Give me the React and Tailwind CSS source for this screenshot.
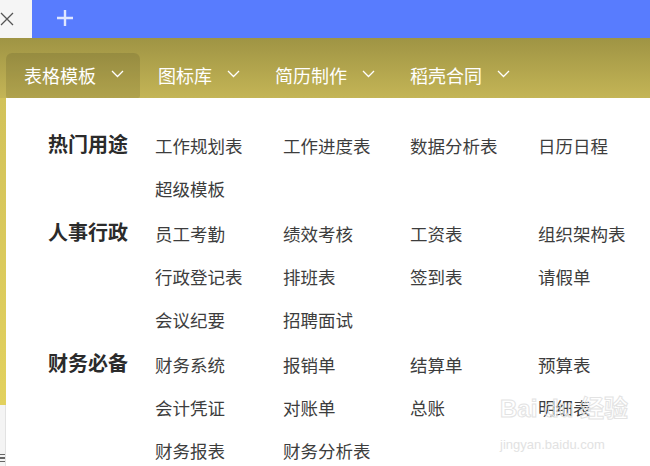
import React from "react";

const FONT = { fontFamily: '"Microsoft YaHei", "Noto Sans CJK SC", "Noto Sans", sans-serif' };

const NAV = ["表格模板", "图标库", "简历制作", "稻壳合同"];

const GROUPS = [
  { title: "热门用途", items: ["工作规划表", "工作进度表", "数据分析表", "日历日程", "超级模板"] },
  {
    title: "人事行政",
    items: ["员工考勤", "绩效考核", "工资表", "组织架构表", "行政登记表", "排班表", "签到表", "请假单", "会议纪要", "招聘面试"],
  },
  {
    title: "财务必备",
    items: ["财务系统", "报销单", "结算单", "预算表", "会计凭证", "对账单", "总账", "明细表", "财务报表", "财务分析表"],
  },
];

const Chevron = () => (
  <svg width="13" height="8" viewBox="0 0 13 8" fill="none" className="ml-[15px] mt-[-4px] shrink-0">
    <path d="M1 1l5.5 5.5L12 1" stroke="white" strokeWidth="1.3" />
  </svg>
);

export default function App() {
  return (
    <div className="w-[650px] h-[466px] overflow-hidden bg-white relative" style={FONT}>
      {/* top tab strip */}
      <div className="flex h-[38px]">
        <div className="w-[32px] shrink-0 bg-[#f5f5f5] flex items-center">
          <svg width="14" height="14" viewBox="0 0 14 14">
            <path d="M1 1l12 12M13 1L1 13" stroke="#555" strokeWidth="1.3" />
          </svg>
        </div>
        <div className="flex-1 bg-[#587cfe] flex items-center">
          <svg width="18" height="18" viewBox="0 0 18 18" className="ml-[24px] mt-[-2px]">
            <path d="M9 1v16M1 9h16" stroke="#dfe6ff" strokeWidth="2.4" />
          </svg>
        </div>
      </div>

      {/* gold nav */}
      <div className="h-[60px] bg-gradient-to-b from-[#9f9444] to-[#c4b556] flex items-end pl-[6px]">
        <div className="flex items-center h-[45px] w-[134px] rounded-t-[6px] rounded-b-[2px] bg-black/10 pl-[18px] text-white text-[18px]">
          {NAV[0]}
          <Chevron />
        </div>
        <div className="flex items-center h-[45px] pl-[18px] text-white text-[18px]">
          {NAV[1]}
          <Chevron />
        </div>
        <div className="flex items-center h-[45px] pl-[35px] text-white text-[18px]">
          {NAV[2]}
          <Chevron />
        </div>
        <div className="flex items-center h-[45px] pl-[35px] text-white text-[18px]">
          {NAV[3]}
          <Chevron />
        </div>
      </div>

      {/* body */}
      <div className="flex h-[368px]">
        <div className="w-[6px] shrink-0 flex flex-col">
          <div className="h-[307px] bg-gradient-to-b from-[#d2c25a] to-[#e2d15e]" />
          <div className="flex-1 bg-[#f4f4f4] border-r border-[#e2e2e2] flex flex-col justify-end pb-[4px] gap-[2px]">
            <div className="h-[1.5px] bg-[#666]" />
            <div className="h-[1.5px] bg-[#666]" />
            <div className="h-[1.5px] bg-[#666]" />
          </div>
        </div>
        <div className="flex-1 min-w-0 bg-white pl-[42px] pt-[26px]">
          {GROUPS.map((g, gi) => (
            <div key={g.title} className={`flex ${gi > 0 ? "mt-[2px]" : ""}`}>
              <div className="w-[107px] shrink-0 h-[43px] leading-[40px] text-[20px] font-bold text-[#2b2b2b]">
                {g.title}
              </div>
              <div className="grid grid-cols-[128px_127px_128px_112px]">
                {g.items.map((it) => (
                  <div key={it} className="h-[43px] leading-[43px] text-[17.5px] text-[#3d3d3d] whitespace-nowrap">
                    {it}
                  </div>
                ))}
              </div>
            </div>
          ))}
        </div>
      </div>

      {/* watermark */}
      <div className="absolute left-[500px] top-[394px] pointer-events-none select-none whitespace-nowrap">
        <div
          className="text-[24px] leading-[30px] font-bold text-transparent [-webkit-text-stroke:1px_#e3e3e3]"
          style={{ fontFamily: '"Liberation Sans", "Noto Sans CJK SC", sans-serif' }}
        >
          Bai du 经验
        </div>
        <div className="text-[13px] leading-[18px] mt-[12px] text-[#e2e2e2]" style={{ fontFamily: '"Liberation Sans", sans-serif' }}>
          jingyan.baidu.com
        </div>
      </div>
    </div>
  );
}
